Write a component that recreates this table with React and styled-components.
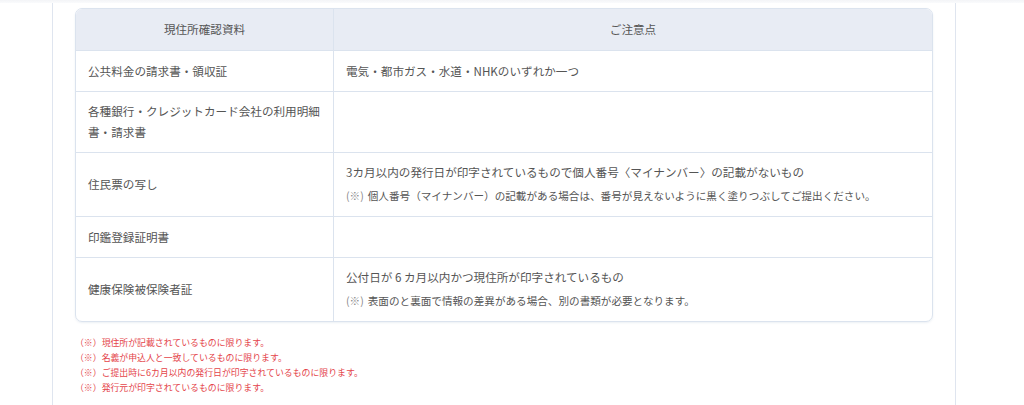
import React from "react";
import styled, { createGlobalStyle } from "styled-components";

const GlobalStyle = createGlobalStyle`
  html, body {
    margin: 0;
    padding: 0;
    background: #ffffff;
  }
  body {
    font-family: "Noto Sans CJK JP", "Noto Sans", sans-serif;
    color: #555;
  }
  * {
    box-sizing: border-box;
  }
`;

const TopShade = styled.div`
  height: 3px;
  background: linear-gradient(#f3f4f7, #fafbfc);
`;

const Page = styled.div`
  width: 1024px;
  height: 402px;
  overflow: hidden;
`;

const Section = styled.div`
  margin-left: 52px;
  width: 904px;
  height: 100%;
  border-left: 1px solid #dfe5ef;
  border-right: 1px solid #dfe5ef;
  padding: 5px 22px 0;
`;

const Table = styled.table`
  width: 858px;
  border-collapse: separate;
  border-spacing: 0;
  border: 1px solid #dbe3ee;
  border-radius: 7px;
  overflow: hidden;
  font-size: 11.6px;
  line-height: 20.5px;
  color: #555;
  box-shadow: 0 1px 2px rgba(180, 195, 215, 0.25);
`;

const Th = styled.th`
  background: #e8ecf4;
  font-weight: 400;
  text-align: center;
  padding: 10px 12px 10px;
  line-height: 21px;
  border-bottom: 1px solid #dbe3ee;
  width: ${(p) => p.$w || "auto"};
  & + & {
    border-left: 1px solid #dbe3ee;
  }
`;

const Td = styled.td`
  padding: 9.5px 12px 9.5px;
  vertical-align: middle;
  border-bottom: ${(p) => (p.$last ? "none" : "1px solid #dbe3ee")};
  & + & {
    border-left: 1px solid #dbe3ee;
  }
`;

const Note = styled.div`
  font-size: 10.6px;
  line-height: 20.5px;
  margin-top: 3.5px;
  color: #555;
`;

const Mark = styled.span`
  color: #888;
  margin-right: 4px;
`;

const Notes = styled.ul`
  list-style: none;
  margin: 13px 0 0;
  padding: 0;
  color: #e4444a;
  font-size: 8.9px;
  line-height: 15px;
`;

const rows = [
  { doc: "公共料金の請求書・領収証", main: "電気・都市ガス・水道・NHKのいずれか一つ" },
  { doc: "各種銀行・クレジットカード会社の利用明細書・請求書", main: "" },
  {
    doc: "住民票の写し",
    main: "3カ月以内の発行日が印字されているもので個人番号〈マイナンバー〉の記載がないもの",
    note: "個人番号（マイナンバー）の記載がある場合は、番号が見えないように黒く塗りつぶしてご提出ください。",
  },
  { doc: "印鑑登録証明書", main: "" },
  {
    doc: "健康保険被保険者証",
    main: "公付日が 6 カ月以内かつ現住所が印字されているもの",
    note: "表面のと裏面で情報の差異がある場合、別の書類が必要となります。",
  },
];

const footNotes = [
  "現住所が記載されているものに限ります。",
  "名義が申込人と一致しているものに限ります。",
  "ご提出時に6カ月以内の発行日が印字されているものに限ります。",
  "発行元が印字されているものに限ります。",
];

export default function App() {
  return (
    <>
      <GlobalStyle />
      <TopShade />
      <Page>
        <Section>
          <Table>
            <thead>
              <tr>
                <Th $w="257px">現住所確認資料</Th>
                <Th>ご注意点</Th>
              </tr>
            </thead>
            <tbody>
              {rows.map((r, i) => (
                <tr key={i}>
                  <Td $last={i === rows.length - 1}>{r.doc}</Td>
                  <Td $last={i === rows.length - 1}>
                    {r.main}
                    {r.note && (
                      <Note>
                        <Mark>(※)</Mark>
                        {r.note}
                      </Note>
                    )}
                  </Td>
                </tr>
              ))}
            </tbody>
          </Table>
          <Notes>
            {footNotes.map((n, i) => (
              <li key={i}>（※）{n}</li>
            ))}
          </Notes>
        </Section>
      </Page>
    </>
  );
}
